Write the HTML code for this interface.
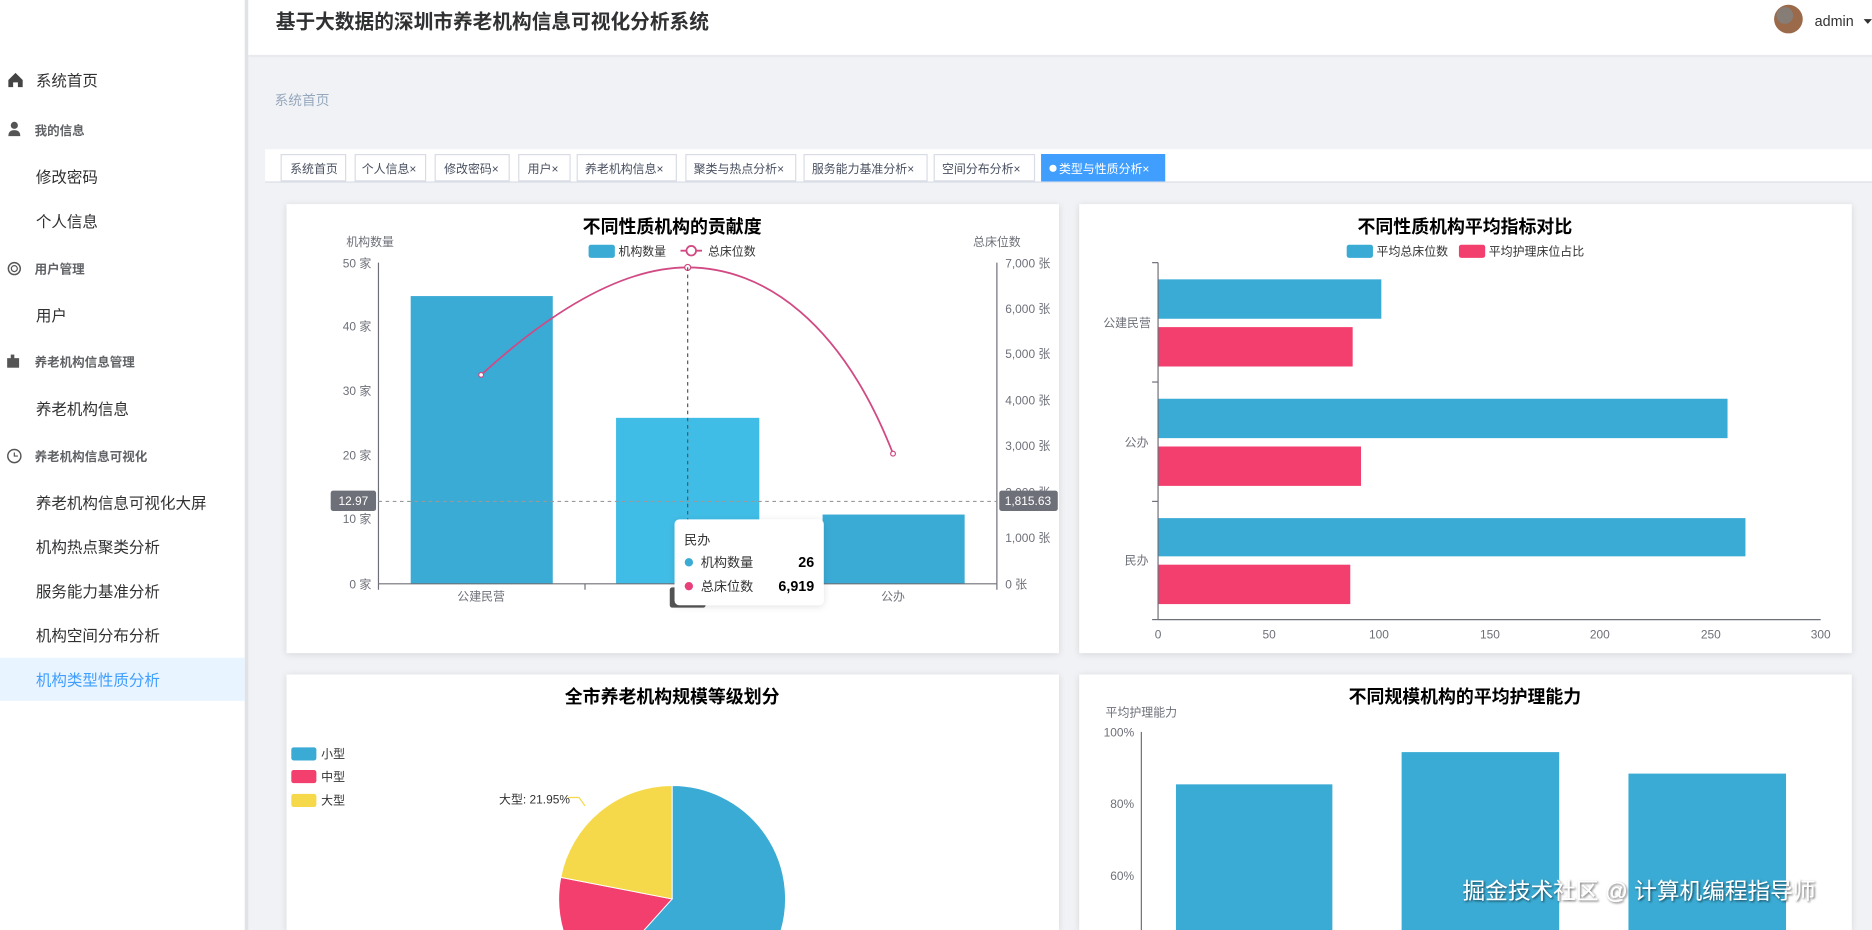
<!DOCTYPE html>
<html><head><meta charset="utf-8"><style>
html,body{margin:0;padding:0;width:1872px;height:930px;overflow:hidden;background:#f0f2f5}
svg{display:block}
text{font-family:"Liberation Sans","Noto Sans CJK SC",sans-serif}
</style></head><body>
<svg width="1872" height="930" viewBox="0 0 1568 779" preserveAspectRatio="none" xmlns="http://www.w3.org/2000/svg">
<defs>
<filter id="sh" x="-10%" y="-10%" width="120%" height="130%"><feDropShadow dx="0" dy="1" stdDeviation="3" flood-color="#000" flood-opacity="0.12"/></filter>
<filter id="ts"><feDropShadow dx="1" dy="1" stdDeviation="1" flood-color="#000" flood-opacity="0.6"/></filter>
</defs>
<rect width="1568" height="779" fill="#f0f2f5"/>
<!-- sidebar -->
<rect x="0" y="0" width="205" height="779" fill="#fff"/>
<rect x="205" y="0" width="3" height="779" fill="#e0e2e6"/>
<rect x="0" y="551" width="205" height="36" fill="#e8f4ff"/>
<g font-size="13" fill="#303133">
<path d="M7,67 L13,61 L19,67 L19,73 L15,73 L15,69 L11,69 L11,73 L7,73 Z" fill="#444"/>
<text x="30" y="72">系统首页</text>
<text x="30" y="153">修改密码</text>
<text x="30" y="190">个人信息</text>
<text x="30" y="269">用户</text>
<text x="30" y="347">养老机构信息</text>
<text x="30" y="426">养老机构信息可视化大屏</text>
<text x="30" y="463">机构热点聚类分析</text>
<text x="30" y="500">服务能力基准分析</text>
<text x="30" y="537">机构空间分布分析</text>
<text x="30" y="574" fill="#409eff">机构类型性质分析</text>
</g>
<g font-size="10.5" fill="#606266" font-weight="bold">
<circle cx="12" cy="105" r="3" fill="#555"/><path d="M7,114 Q7,109 12,109 Q17,109 17,114 Z" fill="#555"/>
<text x="29" y="113">我的信息</text>
<circle cx="12" cy="225" r="5" fill="none" stroke="#555" stroke-width="1.2"/><circle cx="12" cy="225" r="2.5" fill="none" stroke="#555" stroke-width="1"/>
<text x="29" y="229">用户管理</text>
<rect x="6" y="300" width="10" height="8" fill="#555"/><rect x="9" y="297" width="3" height="4" fill="#555"/>
<text x="29" y="307">养老机构信息管理</text>
<circle cx="12" cy="382" r="5.5" fill="none" stroke="#555" stroke-width="1.2"/><path d="M12,379 L12,382 L15,382" stroke="#555" fill="none"/>
<text x="29" y="386">养老机构信息可视化</text>
</g>
<!-- header -->
<rect x="208" y="0" width="1360" height="46" fill="#fff"/>
<rect x="208" y="46" width="1360" height="2" fill="#e8eaee"/>
<text x="231" y="24" font-size="16.5" font-weight="bold" fill="#303133">基于大数据的深圳市养老机构信息可视化分析系统</text>
<circle cx="1498" cy="16" r="12" fill="#9a6a4a"/><circle cx="1495" cy="13" r="7" fill="#7a8a95" opacity="0.6"/>
<text x="1520" y="22" font-size="12" fill="#303133">admin</text>
<path d="M1561,16 L1568,16 L1564.5,20 Z" fill="#303133"/>
<text x="230" y="88" font-size="11.5" fill="#97a8be">系统首页</text>
<!-- tabs -->
<rect x="222" y="125" width="1346" height="28" fill="#fff"/>
<rect x="222" y="152" width="1346" height="1" fill="#d8dce5"/>
<g font-size="10" fill="#495060">
<rect x="235.5" y="129.5" width="54" height="22" fill="#fff" stroke="#d8dce5"/><text x="243" y="145">系统首页</text>
<rect x="297.5" y="129.5" width="59" height="22" fill="#fff" stroke="#d8dce5"/><text x="303" y="145">个人信息×</text>
<rect x="364.5" y="129.5" width="62" height="22" fill="#fff" stroke="#d8dce5"/><text x="372" y="145">修改密码×</text>
<rect x="434.5" y="129.5" width="43" height="22" fill="#fff" stroke="#d8dce5"/><text x="442" y="145">用户×</text>
<rect x="483.5" y="129.5" width="83" height="22" fill="#fff" stroke="#d8dce5"/><text x="490" y="145">养老机构信息×</text>
<rect x="574.5" y="129.5" width="92" height="22" fill="#fff" stroke="#d8dce5"/><text x="581" y="145">聚类与热点分析×</text>
<rect x="673.5" y="129.5" width="103" height="22" fill="#fff" stroke="#d8dce5"/><text x="680" y="145">服务能力基准分析×</text>
<rect x="782.5" y="129.5" width="84" height="22" fill="#fff" stroke="#d8dce5"/><text x="789" y="145">空间分布分析×</text>
<rect x="872" y="129" width="104" height="23" fill="#409eff"/><circle cx="882" cy="141" r="3" fill="#fff"/><text x="887" y="145" fill="#fff">类型与性质分析×</text>
</g>
<!-- cards -->
<rect x="240" y="171" width="647" height="376" fill="#fff" filter="url(#sh)"/>
<rect x="904" y="171" width="647" height="376" fill="#fff" filter="url(#sh)"/>
<rect x="240" y="565" width="647" height="214" fill="#fff" filter="url(#sh)"/>
<rect x="904" y="565" width="647" height="214" fill="#fff" filter="url(#sh)"/>

<!-- chart1 -->
<text x="563" y="195" font-size="15" font-weight="bold" text-anchor="middle" fill="#000">不同性质机构的贡献度</text>
<rect x="493" y="205" width="22" height="11" rx="2" fill="#3aabd4"/><text x="518" y="214" font-size="10" fill="#333">机构数量</text>
<line x1="570" y1="210" x2="588" y2="210" stroke="#d14a84" stroke-width="1.5"/><circle cx="579" cy="210" r="4" fill="#fff" stroke="#d14a84" stroke-width="1.5"/>
<text x="593" y="214" font-size="10" fill="#333">总床位数</text>
<g font-size="10" fill="#6e7079">
<text x="310" y="206" text-anchor="middle">机构数量</text>
<text x="835" y="206" text-anchor="middle">总床位数</text>
<g text-anchor="end"><text x="311" y="224">50 家</text><text x="311" y="277">40 家</text><text x="311" y="331">30 家</text><text x="311" y="385">20 家</text><text x="311" y="438">10 家</text><text x="311" y="493">0 家</text></g>
<text x="842" y="224">7,000 张</text><text x="842" y="262">6,000 张</text><text x="842" y="300">5,000 张</text><text x="842" y="339">4,000 张</text><text x="842" y="377">3,000 张</text><text x="842" y="416">2,000 张</text><text x="842" y="454">1,000 张</text><text x="842" y="493">0 张</text>
<text x="403" y="503" text-anchor="middle">公建民营</text><text x="748" y="503" text-anchor="middle">公办</text>
</g>
<rect x="344" y="248" width="119" height="241" fill="#3aabd4"/>
<rect x="516" y="350" width="120" height="139" fill="#40bde6"/>
<rect x="689" y="431" width="119" height="58" fill="#3aabd4"/>
<line x1="317" y1="220" x2="317" y2="489" stroke="#6e7079"/>
<line x1="835" y1="220" x2="835" y2="489" stroke="#6e7079"/>
<line x1="317" y1="489" x2="835" y2="489" stroke="#6e7079"/>
<g stroke="#6e7079"><line x1="490" y1="489" x2="490" y2="494"/><line x1="663" y1="489" x2="663" y2="494"/><line x1="317" y1="489" x2="317" y2="494"/><line x1="835" y1="489" x2="835" y2="494"/></g>
<path d="M403,314 C460,262 520,224 576,224 C640,224 705,270 748,380" fill="none" stroke="#d14a84" stroke-width="1.5"/>
<circle cx="403" cy="314" r="2" fill="#fff" stroke="#d14a84"/><circle cx="576" cy="224" r="2.5" fill="#fff" stroke="#d14a84"/><circle cx="748" cy="380" r="2" fill="#fff" stroke="#d14a84"/>
<line x1="576" y1="224" x2="576" y2="489" stroke="#555" stroke-dasharray="3,3"/>
<line x1="317" y1="420" x2="835" y2="420" stroke="#999" stroke-dasharray="3,3"/>
<rect x="277" y="411" width="38" height="17" rx="2" fill="#6e7079"/><text x="296" y="423" font-size="10" fill="#fff" text-anchor="middle">12.97</text>
<rect x="837" y="411" width="49" height="17" rx="2" fill="#6e7079"/><text x="861" y="423" font-size="10" fill="#fff" text-anchor="middle">1,815.63</text>
<rect x="561" y="492" width="30" height="17" rx="2" fill="#555"/>
<rect x="565" y="435" width="125" height="72" rx="4" fill="#fff" filter="url(#sh)"/>
<text x="573" y="456" font-size="11" fill="#333">民办</text>
<circle cx="577" cy="471" r="3.5" fill="#3aabd4"/><text x="587" y="475" font-size="11" fill="#333">机构数量</text><text x="682" y="475" font-size="12" font-weight="bold" text-anchor="end" fill="#000">26</text>
<circle cx="577" cy="491" r="3.5" fill="#e8407a"/><text x="587" y="495" font-size="11" fill="#333">总床位数</text><text x="682" y="495" font-size="12" font-weight="bold" text-anchor="end" fill="#000">6,919</text>

<!-- chart2 -->
<text x="1227" y="195" font-size="15" font-weight="bold" text-anchor="middle" fill="#000">不同性质机构平均指标对比</text>
<rect x="1128" y="205" width="22" height="11" rx="2" fill="#3aabd4"/><text x="1153" y="214" font-size="10" fill="#333">平均总床位数</text>
<rect x="1222" y="205" width="22" height="11" rx="2" fill="#f23f6e"/><text x="1247" y="214" font-size="10" fill="#333">平均护理床位占比</text>
<rect x="970" y="234" width="187" height="33" fill="#3aabd4"/><rect x="970" y="274" width="163" height="33" fill="#f23f6e"/>
<rect x="970" y="334" width="477" height="33" fill="#3aabd4"/><rect x="970" y="374" width="170" height="33" fill="#f23f6e"/>
<rect x="970" y="434" width="492" height="32" fill="#3aabd4"/><rect x="970" y="473" width="161" height="33" fill="#f23f6e"/>
<line x1="970" y1="220" x2="970" y2="519" stroke="#6e7079"/>
<line x1="970" y1="519" x2="1525" y2="519" stroke="#6e7079"/>
<g stroke="#6e7079"><line x1="965" y1="220" x2="970" y2="220"/><line x1="965" y1="320" x2="970" y2="320"/><line x1="965" y1="420" x2="970" y2="420"/><line x1="965" y1="519" x2="970" y2="519"/></g>
<g font-size="10" fill="#6e7079">
<g text-anchor="end"><text x="964" y="274">公建民营</text><text x="962" y="374">公办</text><text x="962" y="473">民办</text></g>
<g text-anchor="middle"><text x="970" y="535">0</text><text x="1063" y="535">50</text><text x="1155" y="535">100</text><text x="1248" y="535">150</text><text x="1340" y="535">200</text><text x="1433" y="535">250</text><text x="1525" y="535">300</text></g>
</g>

<!-- chart3 -->
<text x="563" y="589" font-size="15" font-weight="bold" text-anchor="middle" fill="#000">全市养老机构规模等级划分</text>
<rect x="244" y="626" width="21" height="11" rx="2" fill="#3aabd4"/><text x="269" y="635" font-size="10" fill="#333">小型</text>
<rect x="244" y="645" width="21" height="11" rx="2" fill="#f23f6e"/><text x="269" y="654" font-size="10" fill="#333">中型</text>
<rect x="244" y="665" width="21" height="11" rx="2" fill="#f5d94a"/><text x="269" y="674" font-size="10" fill="#333">大型</text>
<path d="M563,753 L563,658 A95,95 0 1 1 499.4,823.6 Z" fill="#3aabd4" stroke="#fff" stroke-width="0.8"/>
<path d="M563,753 L499.4,823.6 A95,95 0 0 1 469.7,734.9 Z" fill="#f23f6e" stroke="#fff" stroke-width="0.8"/>
<path d="M563,753 L469.7,734.9 A95,95 0 0 1 563,658 Z" fill="#f5d94a" stroke="#fff" stroke-width="0.8"/>
<path d="M490,675 L485,668 L476,668" fill="none" stroke="#f5d94a"/>
<text x="418" y="673" font-size="10" fill="#333">大型: 21.95%</text>

<!-- chart4 -->
<text x="1227" y="589" font-size="15" font-weight="bold" text-anchor="middle" fill="#000">不同规模机构的平均护理能力</text>
<text x="926" y="600" font-size="10" fill="#6e7079">平均护理能力</text>
<g font-size="10" fill="#6e7079" text-anchor="end"><text x="950" y="617">100%</text><text x="950" y="677">80%</text><text x="950" y="737">60%</text></g>
<line x1="956" y1="613" x2="956" y2="779" stroke="#6e7079"/>
<rect x="985" y="657" width="131" height="122" fill="#3aabd4"/>
<rect x="1174" y="630" width="132" height="149" fill="#3aabd4"/>
<rect x="1364" y="648" width="132" height="131" fill="#3aabd4"/>
<text x="1225" y="753" font-size="19" fill="#fff" filter="url(#ts)">掘金技术社区 @ 计算机编程指导师</text>
</svg>
</body></html>
